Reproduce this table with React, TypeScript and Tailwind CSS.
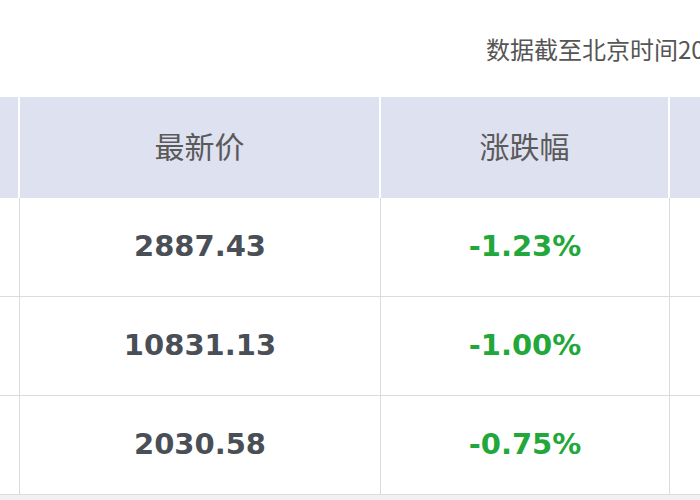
const rows = [
  { price: '2887.43', change: '-1.23%' },
  { price: '10831.13', change: '-1.00%' },
  { price: '2030.58', change: '-0.75%' },
]

const cjk = "font-['Noto_Sans_CJK_SC','Noto_Sans',sans-serif]"
const num = "font-['DejaVu_Sans',sans-serif]"

export default function App() {
  return (
    <div className="h-[500px] w-[700px] overflow-hidden bg-white">
      <div className="w-[1000px]">
        {/* Update time */}
        <div className={`flex h-[97px] items-center pl-[486px] text-[24px] whitespace-nowrap text-[#555] ${cjk}`}>
          数据截至北京时间2024-01-05 15:00
        </div>

        {/* Header */}
        <div className={`flex h-[101px] bg-[#dee1f0] text-[30px] text-[#5a5a5a] ${cjk}`}>
          <div className="w-[20px] border-r-2 border-white" />
          <div className="flex w-[361px] items-center justify-center border-r-2 border-white pb-1">
            最新价
          </div>
          <div className="flex w-[289px] items-center justify-center border-r-2 border-white pb-1">
            涨跌幅
          </div>
          <div className="flex-1" />
        </div>

        {/* Rows */}
        {rows.map((r) => (
          <div key={r.price} className={`flex h-[99px] border-b border-[#dcdcdc] ${num}`}>
            <div className="w-[20px] border-r border-[#dcdcdc]" />
            <div className="flex w-[361px] items-center justify-center border-r border-[#dcdcdc] text-[29px] font-bold text-[#4a4f57]">
              {r.price}
            </div>
            <div className="flex w-[289px] items-center justify-center border-r border-[#dcdcdc] text-[29px] font-bold text-[#22a83a]">
              {r.change}
            </div>
            <div className="flex-1" />
          </div>
        ))}
        <div className="h-[10px] bg-[#f1f1f1]" />
      </div>
    </div>
  )
}
